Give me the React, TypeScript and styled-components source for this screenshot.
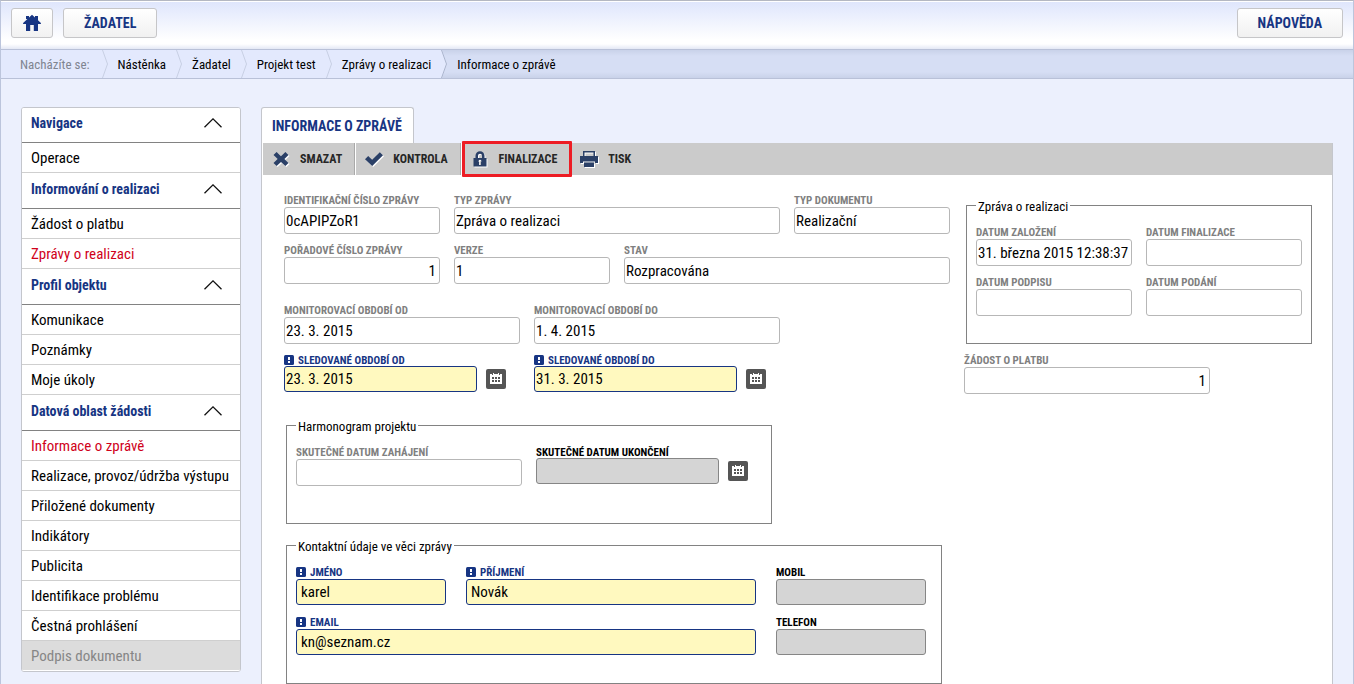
import React, { useId } from "react";
import styled, { createGlobalStyle, css } from "styled-components";

const navy = "#173583";
const line = "#b7b7b7";

const GlobalStyle = createGlobalStyle`
  *, *::before, *::after { box-sizing: border-box; }
  body {
    margin: 0;
    background: #ecf0fd;
    color: #000;
    font-family: "Roboto Condensed", "Liberation Sans Narrow", Roboto, "Liberation Sans", sans-serif;
    font-size: 15px;
  }
  button, input { font: inherit; color: inherit; }
  a { color: inherit; text-decoration: none; }
`;

const Shell = styled.div`
  min-height: 100vh;
  display: flex;
  flex-direction: column;
  border: 1px solid #bcc5dc;
  border-top-color: #b4b8c2;
  border-bottom: 0;
`;

const TopBar = styled.header`
  height: 48px;
  padding: 6px 10px 0;
  display: flex;
  align-items: flex-start;
  gap: 10px;
  border-top: 1px solid #fff;
  background: linear-gradient(#dfe6fc 0, #fff 38px, #fff 42px, #dfe4f3 48px);
`;

const TopButton = styled.button<{ $square?: boolean; $end?: boolean }>`
  height: 30px;
  padding: ${(p) => (p.$square ? "0 11px" : "0 20px")};
  margin-left: ${(p) => (p.$end ? "auto" : "0")};
  display: flex;
  align-items: center;
  border: 1px solid #c6c6c8;
  border-radius: 3px;
  background: linear-gradient(#fff, #f1f1f1);
  color: ${navy};
  font-size: 14px;
  font-weight: 700;
`;

const Crumbs = styled.nav`
  height: 30px;
  padding-left: 19px;
  display: flex;
  align-items: stretch;
  border-top: 1px solid #b9c1d8;
  border-bottom: 1px solid #b9c1d8;
  background: linear-gradient(#c9d2e9 0, #d6def4 6px, #d6def4 22px, #c9d2e9 100%);
  font-size: 13px;
  line-height: 30px;
`;

const CrumbTrail = styled.div`
  margin-left: -19px;
  padding-left: 19px;
  display: flex;
  background: #e3e9fd;
`;

const Crumb = styled.a`
  padding: 0 10px;
`;

const CrumbLead = styled.span`
  padding-right: 12px;
  color: #7f8590;
`;

const Chevron = styled.svg`
  width: 6px;
  height: 28px;
  flex: none;
  display: block;
`;

const Columns = styled.div`
  flex: 1;
  display: flex;
  align-items: stretch;
  gap: 20px;
  padding: 28px 20px 0;
`;

const Menu = styled.nav`
  width: 220px;
  flex: none;
  align-self: flex-start;
  border: 1px solid #c4c6cc;
  border-radius: 3px;
  background: #fff;
  overflow: hidden;
`;

const MenuHeader = styled.button<{ $first?: boolean }>`
  width: 100%;
  height: ${(p) => (p.$first ? 35 : 36)}px;
  padding: 0 17px ${(p) => (p.$first ? 5 : 3)}px 9px;
  display: flex;
  align-items: center;
  justify-content: space-between;
  border: 0;
  border-bottom: 1px solid #828282;
  background: #fff;
  color: ${navy};
  font-size: 14px;
  font-weight: 700;
`;

const MenuItem = styled.a<{ $state?: "active" | "disabled" }>`
  display: block;
  height: 30px;
  padding-left: 9px;
  border-bottom: 1px solid #cfcfcf;
  line-height: 30px;
  color: ${(p) => (p.$state === "active" ? "#d0021b" : p.$state === "disabled" ? "#868686" : "#000")};
  ${(p) => p.$state === "disabled" && css`
    background: #dcdcdc;
    border-bottom-color: #fff;
  `}
`;

const Main = styled.main`
  flex: 1;
  min-width: 0;
  display: flex;
  flex-direction: column;
`;

const Tab = styled.h1`
  align-self: flex-start;
  height: 36px;
  margin: 0;
  padding: 0 11px 0 10px;
  border: 1px solid #c4c6cc;
  border-bottom: 0;
  border-radius: 3px 3px 0 0;
  background: #fff;
  color: ${navy};
  font-size: 14px;
  font-weight: 700;
  line-height: 36px;
`;

const Panel = styled.section`
  flex: 1;
  border: solid #c4c6cc;
  border-width: 0 1px;
  background: #fff;
`;

const Toolbar = styled.div`
  height: 32px;
  display: flex;
  margin-left: 1px;
  background: #cbcbcb;
`;

const ToolButton = styled.button<{ $marked?: boolean; $divided?: boolean }>`
  position: relative;
  height: 32px;
  padding: 0 13px 0 9px;
  display: flex;
  align-items: center;
  gap: 10px;
  border: 0;
  background: transparent;
  color: #262626;
  font-size: 12px;
  font-weight: 700;
  ${(p) => p.$divided && css`
    border-right: 1px solid #fff;
    box-shadow: inset -1px 0 #a9a9a9;
  `}
  ${(p) => p.$marked && css`
    &::after {
      content: "";
      position: absolute;
      inset: -2px -2px -2px 0;
      border: 3px solid #ed1c24;
      border-radius: 1px;
    }
  `}
`;

const Form = styled.form`
  display: grid;
  grid-template-columns: minmax(0, 666px) minmax(0, 348px);
  gap: 14px;
  padding: 18px 19px 0 22px;
`;

const Stack = styled.div<{ $gap: number }>`
  display: flex;
  flex-direction: column;
  gap: ${(p) => p.$gap}px;
`;

const Row = styled.div<{ $cols: string; $gap?: number; $rowGap?: number }>`
  display: grid;
  grid-template-columns: ${(p) => p.$cols};
  gap: ${(p) => p.$rowGap ?? 9}px ${(p) => p.$gap ?? 14}px;
`;

const Side = styled.div`
  padding-top: 5px;
  display: flex;
  flex-direction: column;
  gap: 9px;
`;

const Group = styled.fieldset<{ $width: number; $bottom: number; $top?: number }>`
  width: 100%;
  max-width: ${(p) => p.$width}px;
  min-width: 0;
  margin: ${(p) => p.$top ?? 0}px 0 0 2px;
  padding: 12px 9px ${(p) => p.$bottom}px;
  border: 1px solid #828282;
`;

const Legend = styled.legend`
  padding: 2px 2px 0;
  font-size: 13px;
  line-height: 13px;
`;

type Tone = "plain" | "required" | "locked";

const FieldBox = styled.div<{ $span?: number }>`
  min-width: 0;
  grid-column: span ${(p) => p.$span ?? 1};
`;

const Label = styled.label<{ $tone: Tone }>`
  display: flex;
  align-items: center;
  gap: 4px;
  height: 14px;
  padding-top: 2px;
  white-space: nowrap;
  font-size: 11px;
  font-weight: 700;
  line-height: 12px;
  color: ${(p) => (p.$tone === "required" ? navy : p.$tone === "locked" ? "#000" : "#808080")};
`;

const Input = styled.input<{ $tone: Tone; $right?: boolean; $inset?: boolean }>`
  display: block;
  width: 100%;
  min-width: 0;
  height: ${(p) => (p.$tone === "plain" ? 27 : 26)}px;
  padding: 0 ${(p) => (p.$right ? 3 : 1)}px 0 ${(p) => (p.$inset ? 4 : 1)}px;
  border: 1px solid ${(p) => (p.$tone === "required" ? navy : p.$tone === "locked" ? "#868686" : line)};
  border-radius: 3px;
  background: ${(p) => (p.$tone === "required" ? "#fff9bf" : p.$tone === "locked" ? "#d5d5d5" : "#fff")};
  text-align: ${(p) => (p.$right ? "right" : "left")};
  font-size: 15px;
  color: #000;
  outline: 0;
`;

const DateControl = styled.div`
  display: flex;
  align-items: center;
  gap: 9px;
  margin: -1px 14px 0 0;
`;

const CalendarButton = styled.button`
  width: 20px;
  height: 20px;
  flex: none;
  padding: 0;
  border: 0;
  border-radius: 2px;
  background: #555;
`;

const Icon = styled.svg`
  display: block;
  flex: none;
`;

const Mark = styled(Icon)`
  margin-bottom: 2px;
`;

const ToolGlyph = styled(Icon)`
  margin-right: -1px;
`;

const RequiredMark = () => (
  <Mark width="10" height="10" viewBox="0 0 10 10" aria-hidden="true">
    <rect width="10" height="10" rx="1.5" fill={navy} />
    <path d="M4 2h2v3H4zM4 6h2v2H4z" fill="#fff" />
  </Mark>
);

const CalendarIcon = () => (
  <Icon width="20" height="20" viewBox="0 0 20 20" shapeRendering="crispEdges" aria-hidden="true">
    <path d="M4 5h3V4h1v1h4V4h1v1h3v10H4z" fill="#fff" />
    <path d="M6 8h2v2H6zM9 8h2v2H9zM12 8h2v2h-2zM6 11h2v2H6zM9 11h2v2H9zM12 11h2v2h-2zM6 4h1v2H6zM9 4h2v1H9zM13 4h1v2h-1z" fill="#555" />
  </Icon>
);

const HomeIcon = () => (
  <Icon width="18" height="18" viewBox="0 0 18 18" aria-hidden="true">
    <path d="M9 .8 12 3.6V2h3v4.3L17.9 9v1H15v7h-4.2v-6H7.2v6H3v-7H.1V9z" fill={navy} />
    <path d="M3 2h3v3H3z" fill={navy} />
  </Icon>
);

const ArrowUp = () => (
  <Icon width="20" height="10" viewBox="0 0 20 10" aria-hidden="true">
    <path d="M1.5 9.3 10 .9l8.500 8.400" fill="none" stroke="#111" strokeWidth="1.3" />
  </Icon>
);

const toolPaths = {
  cross: "M4.600 2 9 6.200 13.400 2 16.500 5 12.400 9l4.100 4-3.100 3L9 11.900 4.600 16l-3.100-3L5.600 9 1.500 5z",
  check: "M0 9.200 3.200 6l4 3.800L14.800 2.300 18 5.300 7.200 16z",
  lock: "M4.500 8V5.800a4.500 4.500 0 0 1 9 0V8H15.500v8.500h-13V8zM7 8h4V5.800a2 2 0 0 0-4 0zM9 9.800a1.400 1.400 0 0 0-.9 2.500V15h1.800v-2.700A1.400 1.400 0 0 0 9 9.800z",
  print: "M3 1h12v5h3v7h-3v-1.500H3V13H0V6h3zM4.500 2.500V6h9V2.500zM4 12.500h10V17H4z",
};

const ToolIcon = ({ name }: { name: keyof typeof toolPaths }) => (
  <ToolGlyph width="19" height="19" viewBox="0 0 19 19" aria-hidden="true">
    <path d={toolPaths[name]} transform="translate(1 1)" fill="#fff" fillRule="evenodd" />
    <path d={toolPaths[name]} fill="#2b4067" fillRule="evenodd" />
  </ToolGlyph>
);

const CrumbDivider = ({ last }: { last?: boolean }) => (
  <Chevron viewBox="0 0 6 28" aria-hidden="true">
    {last && <path d="M0 0h1l5 14-5 14H0z" fill="#e3e9fd" />}
    <path d="M.5 0 5.500 14 .5 28" fill="none" stroke={last ? "#aab4cc" : "#c8cfe3"} />
  </Chevron>
);

interface FieldProps {
  label: string;
  value?: string;
  tone?: Tone;
  span?: number;
  right?: boolean;
  inset?: boolean;
  date?: boolean;
}

const Field = ({ label, value = "", tone = "plain", span, right, inset, date }: FieldProps) => {
  const id = useId();
  const input = (
    <Input
      id={id}
      type="text"
      defaultValue={value}
      readOnly={tone !== "required"}
      $tone={tone}
      $right={right}
      $inset={inset}
    />
  );
  return (
    <FieldBox $span={span}>
      <Label htmlFor={id} $tone={tone}>
        {tone === "required" && <RequiredMark />}
        {label}
      </Label>
      {date ? (
        <DateControl>
          {input}
          <CalendarButton type="button" aria-label={label}>
            <CalendarIcon />
          </CalendarButton>
        </DateControl>
      ) : (
        input
      )}
    </FieldBox>
  );
};

type Item = { text: string; state?: "active" | "disabled" };

const menu: { title: string; items: Item[] }[] = [
  { title: "Navigace", items: [{ text: "Operace" }] },
  {
    title: "Informování o realizaci",
    items: [{ text: "Žádost o platbu" }, { text: "Zprávy o realizaci", state: "active" }],
  },
  {
    title: "Profil objektu",
    items: [{ text: "Komunikace" }, { text: "Poznámky" }, { text: "Moje úkoly" }],
  },
  {
    title: "Datová oblast žádosti",
    items: [
      { text: "Informace o zprávě", state: "active" },
      { text: "Realizace, provoz/údržba výstupu" },
      { text: "Přiložené dokumenty" },
      { text: "Indikátory" },
      { text: "Publicita" },
      { text: "Identifikace problému" },
      { text: "Čestná prohlášení" },
      { text: "Podpis dokumentu", state: "disabled" },
    ],
  },
];

const trail = ["Nástěnka", "Žadatel", "Projekt test", "Zprávy o realizaci"];

export default function App() {
  return (
    <Shell>
      <GlobalStyle />
      <TopBar>
        <TopButton $square aria-label="Nástěnka">
          <HomeIcon />
        </TopButton>
        <TopButton>ŽADATEL</TopButton>
        <TopButton $end>NÁPOVĚDA</TopButton>
      </TopBar>

      <Crumbs>
        <CrumbTrail>
          <CrumbLead>Nacházíte se:</CrumbLead>
          <CrumbDivider />
          {trail.map((text, i) => (
            <React.Fragment key={text}>
              <Crumb href="#">{text}</Crumb>
              {i < trail.length - 1 && <CrumbDivider />}
            </React.Fragment>
          ))}
        </CrumbTrail>
        <CrumbDivider last />
        <Crumb href="#">Informace o zprávě</Crumb>
      </Crumbs>

      <Columns>
        <Menu>
          {menu.map((group, i) => (
            <React.Fragment key={group.title}>
              <MenuHeader type="button" $first={i === 0}>
                {group.title}
                <ArrowUp />
              </MenuHeader>
              {group.items.map((item) => (
                <MenuItem key={item.text} href="#" $state={item.state}>
                  {item.text}
                </MenuItem>
              ))}
            </React.Fragment>
          ))}
        </Menu>

        <Main>
          <Tab>INFORMACE O ZPRÁVĚ</Tab>
          <Panel>
            <Toolbar>
              <ToolButton $divided><ToolIcon name="cross" />SMAZAT</ToolButton>
              <ToolButton $divided><ToolIcon name="check" />KONTROLA</ToolButton>
              <ToolButton $divided $marked><ToolIcon name="lock" />FINALIZACE</ToolButton>
              <ToolButton><ToolIcon name="print" />TISK</ToolButton>
            </Toolbar>

            <Form>
              <div>
                <Stack $gap={19}>
                  <Row $cols="repeat(4, minmax(0, 1fr))">
                    <Field label="IDENTIFIKAČNÍ ČÍSLO ZPRÁVY" value="0cAPIPZoR1" />
                    <Field label="TYP ZPRÁVY" value="Zpráva o realizaci" span={2} />
                    <Field label="TYP DOKUMENTU" value="Realizační" />
                    <Field label="POŘADOVÉ ČÍSLO ZPRÁVY" value="1" right />
                    <Field label="VERZE" value="1" />
                    <Field label="STAV" value="Rozpracována" span={2} />
                  </Row>
                  <Row $cols="minmax(0, 236px) minmax(0, 246px)">
                    <Field label="MONITOROVACÍ OBDOBÍ OD" value="23. 3. 2015" />
                    <Field label="MONITOROVACÍ OBDOBÍ DO" value="1. 4. 2015" />
                    <Field label="SLEDOVANÉ OBDOBÍ OD" value="23. 3. 2015" tone="required" date />
                    <Field label="SLEDOVANÉ OBDOBÍ DO" value="31. 3. 2015" tone="required" date />
                  </Row>
                </Stack>

                <Group $width={486} $bottom={37} $top={26}>
                  <Legend>Harmonogram projektu</Legend>
                  <Row $cols="repeat(2, minmax(0, 226px))">
                    <Field label="SKUTEČNÉ DATUM ZAHÁJENÍ" />
                    <Field label="SKUTEČNÉ DATUM UKONČENÍ" tone="locked" date />
                  </Row>
                </Group>

                <Group $width={656} $bottom={28} $top={14}>
                  <Legend>Kontaktní údaje ve věci zprávy</Legend>
                  <Row $cols="minmax(0, 150px) minmax(0, 290px) minmax(0, 150px)" $gap={20} $rowGap={10}>
                    <Field label="JMÉNO" value="karel" tone="required" inset />
                    <Field label="PŘÍJMENÍ" value="Novák" tone="required" inset />
                    <Field label="MOBIL" tone="locked" />
                    <Field label="EMAIL" value="kn@seznam.cz" tone="required" span={2} inset />
                    <Field label="TELEFON" tone="locked" />
                  </Row>
                </Group>
              </div>

              <Side>
                <Group $width={346} $bottom={27}>
                  <Legend>Zpráva o realizaci</Legend>
                  <Row $cols="repeat(2, minmax(0, 1fr))">
                    <Field label="DATUM ZALOŽENÍ" value="31. března 2015 12:38:37" />
                    <Field label="DATUM FINALIZACE" />
                    <Field label="DATUM PODPISU" />
                    <Field label="DATUM PODÁNÍ" />
                  </Row>
                </Group>
                <Row $cols="minmax(0, 246px)">
                  <Field label="ŽÁDOST O PLATBU" value="1" right />
                </Row>
              </Side>
            </Form>
          </Panel>
        </Main>
      </Columns>
    </Shell>
  );
}
